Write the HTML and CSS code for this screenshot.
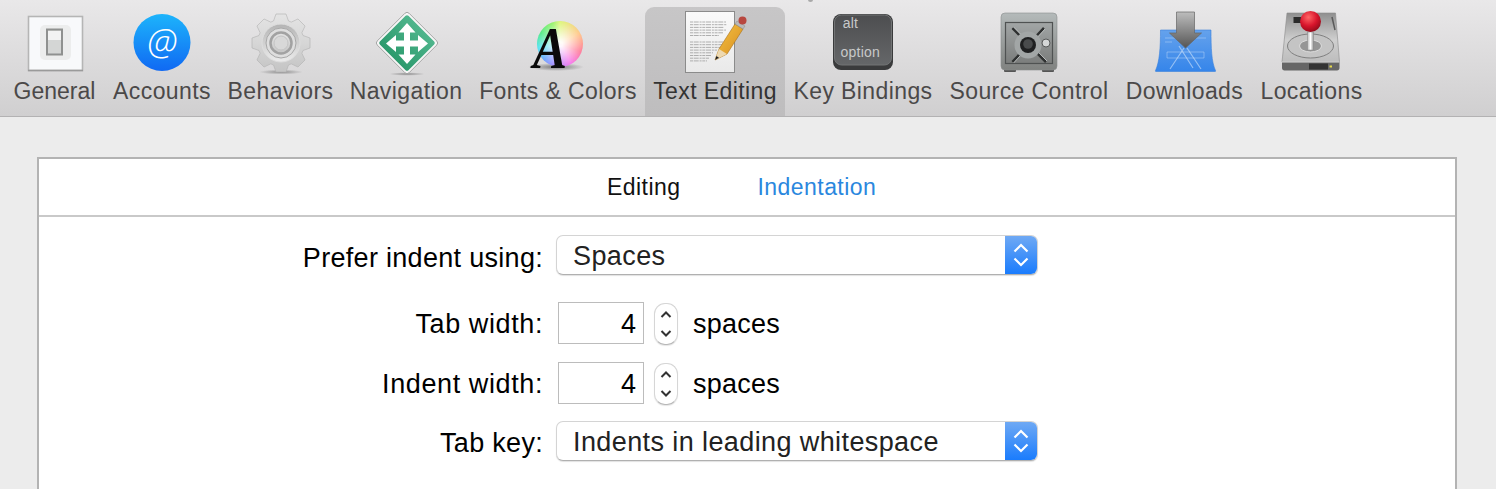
FILE: index.html
```html
<!DOCTYPE html>
<html lang="en">
<head>
<meta charset="utf-8">
<title>Text Editing Preferences</title>
<link rel="stylesheet" href="styles.css">
</head>
<body>
<svg class="defs" width="0" height="0" aria-hidden="true">
  <defs>
    <linearGradient id="g-blue" x1="0" y1="0" x2="0" y2="1"><stop offset="0" stop-color="#1db4fb"/><stop offset="1" stop-color="#1069f3"/></linearGradient>
    <linearGradient id="g-silver" x1="0" y1="0" x2="0" y2="1"><stop offset="0" stop-color="#e4e4e4"/><stop offset=".5" stop-color="#d6d6d6"/><stop offset="1" stop-color="#c4c4c4"/></linearGradient>
    <linearGradient id="g-silver2" x1="0" y1="0" x2="0" y2="1"><stop offset="0" stop-color="#b4b4b4"/><stop offset="1" stop-color="#ececec"/></linearGradient>
    <linearGradient id="g-green" x1="0" y1="0" x2="0" y2="1"><stop offset="0" stop-color="#4fb58c"/><stop offset="1" stop-color="#2c9a6d"/></linearGradient>
    <linearGradient id="g-key" x1="0" y1="0" x2="0" y2="1"><stop offset="0" stop-color="#4d4e50"/><stop offset="1" stop-color="#656769"/></linearGradient>
    <linearGradient id="g-safe" x1="0" y1="0" x2="0" y2="1"><stop offset="0" stop-color="#b4baba"/><stop offset="1" stop-color="#808280"/></linearGradient>
    <linearGradient id="g-door" x1="0" y1="0" x2="0" y2="1"><stop offset="0" stop-color="#a2a6a6"/><stop offset="1" stop-color="#7b7d7c"/></linearGradient>
    <linearGradient id="g-print" x1="0" y1="0" x2="0" y2="1"><stop offset="0" stop-color="#65a2ec"/><stop offset="1" stop-color="#3585ea"/></linearGradient>
    <linearGradient id="g-arrow" x1="0" y1="0" x2="0" y2="1"><stop offset="0" stop-color="#bdbdbd"/><stop offset="1" stop-color="#555"/></linearGradient>
    <linearGradient id="g-drive" x1="0" y1="0" x2="0" y2="1"><stop offset="0" stop-color="#8f8f8f"/><stop offset=".55" stop-color="#cfcfcf"/><stop offset="1" stop-color="#bdbdbd"/></linearGradient>
    <linearGradient id="g-pencil" x1="0" y1="0" x2="1" y2="1"><stop offset="0" stop-color="#f6c544"/><stop offset="1" stop-color="#d68a1e"/></linearGradient>
    <linearGradient id="g-page" x1="0" y1="0" x2="0" y2="1"><stop offset="0" stop-color="#fafafa"/><stop offset="1" stop-color="#e9e9e9"/></linearGradient>
    <linearGradient id="g-stem" x1="0" y1="0" x2="1" y2="0"><stop offset="0" stop-color="#bbb"/><stop offset=".5" stop-color="#fff"/><stop offset="1" stop-color="#999"/></linearGradient>
    <radialGradient id="g-ball" cx=".4" cy=".3" r=".75"><stop offset="0" stop-color="#f66"/><stop offset=".55" stop-color="#d8152c"/><stop offset="1" stop-color="#8c0a18"/></radialGradient>
    <radialGradient id="g-shadow"><stop offset="0" stop-color="#000" stop-opacity=".35"/><stop offset="1" stop-color="#000" stop-opacity="0"/></radialGradient>
  </defs>
</svg>

<nav class="toolbar">
  <a class="tool tool-general">
    <svg class="icon" viewBox="0 0 64 64">
      <rect x="5.500" y="6.500" width="54" height="54" fill="#f8f9fb" stroke="#b5b5b5" stroke-width="1.600"/>
      <path d="M5 60.500H60" stroke="#9a9a9a" stroke-width="1.500"/>
      <rect x="17" y="15" width="31" height="35" rx="5" fill="#eceded"/>
      <rect x="24" y="19.500" width="15" height="25" fill="#d4d6d5" stroke="#8f9190" stroke-width="2"/>
      <rect x="25" y="21" width="13" height="9" fill="#f2f3f3"/>
    </svg>
    <span class="tool-label label-tight">General</span>
  </a>
  <a class="tool tool-accounts">
    <svg class="icon" viewBox="0 0 64 64">
      <circle cx="32" cy="32.500" r="28.500" fill="url(#g-blue)"/>
      <text class="at-sign" x="32" y="45" text-anchor="middle">@</text>
    </svg>
    <span class="tool-label">Accounts</span>
  </a>
  <a class="tool tool-behaviors">
    <svg class="icon" viewBox="0 0 64 64">
      <ellipse cx="32" cy="62" rx="22" ry="2.500" fill="url(#g-shadow)"/>
      <polygon transform="translate(32 33)" fill="url(#g-silver)" stroke="#b0b0b0" stroke-width=".6" points="-7.500,-22 -5,-29 5,-29 7.500,-22 10.250,-20.860 16.970,-24.040 24.040,-16.970 20.860,-10.250 22,-7.500 29,-5 29,5 22,7.500 20.860,10.250 24.040,16.970 16.970,24.040 10.250,20.860 7.500,22 5,29 -5,29 -7.500,22 -10.250,20.860 -16.970,24.040 -24.040,16.970 -20.860,10.250 -22,7.500 -29,5 -29,-5 -22,-7.500 -20.860,-10.250 -24.040,-16.970 -16.970,-24.040 -10.250,-20.860"/>
      <circle cx="32" cy="33" r="19" fill="url(#g-silver2)" stroke="#dedede"/>
      <circle cx="32" cy="33" r="15" fill="#dedede" stroke="#a8a8a8"/>
      <circle cx="32" cy="33" r="10.500" fill="url(#g-silver)" stroke="#a2a2a2" stroke-width="2.500"/>
      <circle cx="32" cy="33" r="7" fill="#d8d8d8" stroke="#c4c4c4"/>
    </svg>
    <span class="tool-label">Behaviors</span>
  </a>
  <a class="tool tool-navigation">
    <svg class="icon" viewBox="0 0 64 64">
      <ellipse cx="33" cy="64" rx="18" ry="1.800" fill="url(#g-shadow)"/>
      <rect x="10.500" y="10.500" width="45" height="45" rx="3" transform="rotate(45 33 33)" fill="#f6f6f6" stroke="#999" stroke-width=".8"/>
      <rect x="12.800" y="12.800" width="40.400" height="40.400" rx="2" transform="rotate(45 33 33)" fill="url(#g-green)"/>
      <path fill="#fff" d="M33 13 41.500 22.500H36V30.500H44V25L54 33.500 44 42V36.500H36V44.500H41.500L33 54 24.500 44.500H30V36.500H22V42L12 33.500 22 25V30.500H30V22.500H24.500Z"/>
    </svg>
    <span class="tool-label">Navigation</span>
  </a>
  <a class="tool tool-fonts">
    <span class="fonts-icon">
      <span class="fonts-shadow"></span>
      <span class="fonts-wheel"></span>
      <span class="fonts-a">A</span>
    </span>
    <span class="tool-label">Fonts &amp; Colors</span>
  </a>
  <a class="tool tool-text is-active">
    <svg class="icon" viewBox="0 0 64 64">
      <rect x="2.500" y="1.500" width="49" height="61" fill="url(#g-page)" stroke="#8b8b8b"/>
      <g stroke="#a6a6a6" stroke-width=".9" stroke-dasharray="3 .7 5 .9 2 .7">
        <path d="M7 12H43M7 14.700H44M7 17.400H41M7 20.100H43M7 22.800H40M7 25.500H36"/>
        <path d="M7 32H44M7 34.700H41M7 37.400H40M7 40.100H34M7 42.800H30M7 45.500H28M7 48.200H26M7 50.900H24"/>
      </g>
      <path d="M32 50 36 39 52 14 60 19 44 44Z" fill="url(#g-pencil)" stroke="#a8701a" stroke-width=".6"/>
      <path d="M32 50 36 39 44 44Z" fill="#eed9b0"/>
      <path d="M32 50 33.400 46 36 47.700Z" fill="#222"/>
      <path d="M52 14 54 11 62 16 60 19Z" fill="#b9b9b9" stroke="#8a8a8a" stroke-width=".5"/>
      <circle cx="59.500" cy="10.500" r="4" fill="#b8473f"/>
    </svg>
    <span class="tool-label">Text Editing</span>
  </a>
  <a class="tool tool-keys">
    <svg class="icon" viewBox="0 0 64 64">
      <rect x="2" y="4" width="60" height="56" rx="8" fill="#3a3b3c"/>
      <rect x="3.500" y="5" width="57" height="50" rx="7" fill="url(#g-key)" stroke="#727475"/>
      <text class="key-text" x="11.700" y="18">alt</text>
      <text class="key-text" x="9.600" y="47">option</text>
    </svg>
    <span class="tool-label">Key Bindings</span>
  </a>
  <a class="tool tool-source">
    <svg class="icon" viewBox="0 0 64 64">
      <rect x="7" y="58" width="12" height="4" rx="1" fill="#555"/>
      <rect x="45" y="58" width="12" height="4" rx="1" fill="#555"/>
      <rect x="4" y="3" width="56" height="57" rx="4" fill="url(#g-safe)" stroke="#8b8f8f" stroke-width=".6"/>
      <rect x="8.500" y="12.500" width="47" height="41" fill="url(#g-door)" stroke="#4f5252" stroke-width="1.200"/>
      <path d="M15.500 18 49 52M47 18 15.500 52" stroke="#2f3131" stroke-width="2.600"/>
      <path d="M16.500 17 50 51M48 19 16.500 53" stroke="#d2d5d5" stroke-width=".8"/>
      <circle cx="31" cy="35" r="13.500" fill="#a2a6a6"/>
      <circle cx="31" cy="35" r="8" fill="#1f2021"/>
      <circle cx="31" cy="34" r="4.800" fill="#494b4c"/>
      <circle cx="49" cy="33" r="4" fill="#d5d7d7" stroke="#585a5a"/>
    </svg>
    <span class="tool-label">Source Control</span>
  </a>
  <a class="tool tool-downloads">
    <svg class="icon" viewBox="0 0 64 64">
      <path d="M7.500 20H58C58 38 58.500 52 62.500 60.500 63 61 62.500 61.500 62 61.500H3C2.500 61.500 2 61 2.500 60.500 6.500 52 7.500 38 7.500 20Z" fill="url(#g-print)" stroke="#3b82dc" stroke-width=".6"/>
      <g stroke="#cfe3fa" fill="none" stroke-opacity=".6">
        <path stroke-width=".7" d="M12 28H23M12 32H19M43 28H53M14 42H51V48H14Z"/>
        <path stroke-width="1.200" d="M31 38 17 59M34 38 48 59M26 36 40 58"/>
      </g>
      <path d="M23.500 2H41.500V23H48.500L32.500 38 16.500 23H23.500Z" fill="url(#g-arrow)" stroke="#666" stroke-width=".7"/>
    </svg>
    <span class="tool-label">Downloads</span>
  </a>
  <a class="tool tool-locations">
    <svg class="icon" viewBox="0 0 64 64">
      <path d="M7 3H55.500L59.500 52H2Z" fill="url(#g-drive)" stroke="#8a8a8a" stroke-width=".6"/>
      <path d="M2 52H59.500V58C59.500 59.500 58.500 60.500 57 60.500H4.500C3 60.500 2 59.500 2 58Z" fill="#666"/>
      <path d="M2 52H59.500" stroke="#ddd"/>
      <rect x="29" y="53.500" width="19" height="6" fill="#333"/>
      <rect x="49.500" y="55.500" width="2.500" height="2" fill="#e5d94a"/>
      <rect x="13.500" y="7" width="13.500" height="6" fill="#2b2b2b"/>
      <path d="M52 7 55 20" stroke="#5a5a5a" stroke-width="1.500"/>
      <ellipse cx="30.500" cy="36" rx="23" ry="12" fill="#c4c4c4" stroke="#7f7f7f"/>
      <ellipse cx="30.500" cy="36" rx="11" ry="6" fill="#959595" stroke="#dcdcdc"/>
      <rect x="27.500" y="22" width="6" height="18" fill="url(#g-stem)" stroke="#888" stroke-width=".5"/>
      <circle cx="30.500" cy="11.500" r="10.500" fill="url(#g-ball)"/>
    </svg>
    <span class="tool-label">Locations</span>
  </a>
</nav>

<main class="content">
  <section class="panel">
    <div class="tabs">
      <span class="tab">Editing</span>
      <span class="tab tab-current">Indentation</span>
    </div>
    <div class="form">
      <div class="row row-popup">
        <span class="row-label">Prefer indent using:</span>
        <div class="popup">
          <span class="popup-value">Spaces</span>
          <span class="popup-arrows">
            <svg width="18" height="26" viewBox="0 0 18 26"><path d="M2.500 9.500 9 3 15.500 9.500M2.500 16.500 9 23 15.500 16.500" fill="none" stroke="#fff" stroke-width="2.200"/></svg>
          </span>
        </div>
      </div>
      <div class="row row-number">
        <span class="row-label">Tab width:</span>
        <span class="field">4</span>
        <span class="stepper">
          <svg width="14" height="32" viewBox="0 0 14 32"><path d="M2.500 9 7 4.500 11.500 9M2.500 23 7 27.500 11.500 23" fill="none" stroke="#333" stroke-width="2"/></svg>
        </span>
        <span class="unit">spaces</span>
      </div>
      <div class="row row-number row-second">
        <span class="row-label">Indent width:</span>
        <span class="field">4</span>
        <span class="stepper">
          <svg width="14" height="32" viewBox="0 0 14 32"><path d="M2.500 9 7 4.500 11.500 9M2.500 23 7 27.500 11.500 23" fill="none" stroke="#333" stroke-width="2"/></svg>
        </span>
        <span class="unit">spaces</span>
      </div>
      <div class="row row-popup row-last">
        <span class="row-label">Tab key:</span>
        <div class="popup">
          <span class="popup-value">Indents in leading whitespace</span>
          <span class="popup-arrows">
            <svg width="18" height="26" viewBox="0 0 18 26"><path d="M2.500 9.500 9 3 15.500 9.500M2.500 16.500 9 23 15.500 16.500" fill="none" stroke="#fff" stroke-width="2.200"/></svg>
          </span>
        </div>
      </div>
    </div>
  </section>
</main>
</body>
</html>
```
FILE: styles.css
```css
* { box-sizing: border-box; }
html, body { margin: 0; height: 489px; overflow: hidden; }
body {
  background: #ececec;
  font-family: "Liberation Sans", Arial, sans-serif;
  color: #000;
  position: relative;
}
body::before {
  content: "";
  position: absolute;
  left: 808px;
  top: -2px;
  width: 5px;
  height: 4px;
  border-radius: 50%;
  background: #a9a9a9;
}
.defs { position: absolute; }

.toolbar {
  display: flex;
  height: 117px;
  padding-left: 5px;
  align-items: stretch;
  background: linear-gradient(#e9e8e9, #d0cfd0);
  border-bottom: 1px solid #b3b2b3;
}
.tool {
  display: flex;
  flex-direction: column;
  align-items: center;
  padding-top: 10px;
}
.tool-general { width: 99px; }
.tool-accounts { width: 116px; }
.tool-behaviors { width: 121px; }
.tool-navigation { width: 130px; }
.tool-fonts { width: 174px; }
.tool-text { width: 140px; }
.tool-keys { width: 156px; }
.tool-source { width: 176px; }
.tool-downloads { width: 135px; }
.tool-locations { width: 119px; }
.tool.is-active {
  margin-top: 7px;
  padding-top: 3px;
  background: linear-gradient(#c7c6c7, #bebdbe);
  border-radius: 9px 9px 0 0;
}
.is-active .tool-label { color: #333; }
.icon { display: block; width: 64px; height: 64px; flex: none; overflow: visible; }
.tool-label {
  margin-top: 3px;
  font-size: 23px;
  line-height: 28px;
  letter-spacing: .4px;
  white-space: nowrap;
  color: #4b4949;
}
.label-tight { letter-spacing: 0; }

.at-sign {
  font-family: "Open Sans", "Liberation Sans", sans-serif;
  font-weight: 300;
  font-size: 36px;
  fill: #fff;
  font-style: italic;
}
.key-text {
  font-family: "Liberation Sans", sans-serif;
  font-size: 14px;
  letter-spacing: .2px;
  fill: #c8c9c9;
}

.fonts-icon { display: block; position: relative; width: 64px; height: 64px; flex: none; }
.fonts-wheel {
  position: absolute;
  left: 11px;
  top: 11px;
  width: 46px;
  height: 46px;
  border-radius: 50%;
  background:
    radial-gradient(circle, rgba(255,255,255,.95) 8%, rgba(255,255,255,0) 78%),
    conic-gradient(from 0deg, #d9f56a, #ffc27a 60deg, #ff6f8f 110deg, #f56be8 150deg, #a978ff 190deg, #5b9aff 225deg, #3fe0f0 260deg, #3fe878 300deg, #8bf05a 340deg, #d9f56a);
}
.fonts-a {
  position: absolute;
  left: 7px;
  top: 8px;
  font-family: "Liberation Serif", serif;
  font-weight: bold;
  font-style: italic;
  font-size: 60px;
  line-height: 60px;
  color: #0a0a0a;
  transform: scaleX(.85);
  transform-origin: left center;
}
.fonts-shadow {
  position: absolute;
  left: 2px;
  top: 53px;
  width: 56px;
  height: 8px;
  border-radius: 50%;
  background: radial-gradient(closest-side, rgba(0,0,0,.45), rgba(0,0,0,0));
}

.content { padding: 40px 39px 0 37px; }
.panel {
  background: #fff;
  border: 2px solid #b3b3b3;
  height: 400px;
}
.tabs {
  display: flex;
  height: 58px;
  padding-left: 568px;
  align-items: center;
  gap: 77px;
  border-bottom: 2px solid #c9c9c9;
}
.tab { font-size: 23px; letter-spacing: .45px; color: #111; }
.tab-current { color: #2a87de; }

.form { padding-top: 18px; }
.row { display: flex; align-items: center; }
.row-popup { height: 40px; }
.row-number { height: 42px; margin-top: 27px; }
.row-second { margin-top: 18px; }
.row-last { margin-top: 17px; }
.row-label {
  flex: none;
  width: 504px;
  margin-right: 13px;
  text-align: right;
  font-size: 27px;
  letter-spacing: .3px;
  padding-top: 6px;
}
.row-number .row-label { letter-spacing: .6px; padding-top: 2px; }
.row-last .row-label { padding-top: 5px; }
.popup {
  display: flex;
  width: 482px;
  height: 40px;
  border: 1px solid #d4d4d4;
  border-bottom-color: #b0b0b0;
  border-radius: 7px;
  box-shadow: 0 1px 1px rgba(0,0,0,.12);
  overflow: hidden;
  background: #fff;
}
.popup-value {
  flex: 1;
  padding-left: 16px;
  font-size: 27px;
  line-height: 40px;
  letter-spacing: .4px;
  color: #222;
}
.popup-arrows {
  flex: none;
  width: 32px;
  display: flex;
  align-items: center;
  justify-content: center;
  background: linear-gradient(#6fa9f4, #1a7cfd);
}
.field {
  flex: none;
  width: 86px;
  height: 42px;
  margin-left: 2px;
  border: 1px solid #bcbcbc;
  padding-right: 7px;
  text-align: right;
  font-size: 27px;
  line-height: 43px;
}
.stepper {
  flex: none;
  width: 24px;
  height: 42px;
  margin: 2px 0 0 10px;
  display: flex;
  align-items: center;
  justify-content: center;
  border: 1px solid #d6d6d6;
  border-bottom-color: #b8b8b8;
  border-radius: 11px;
  box-shadow: 0 1px 1px rgba(0,0,0,.1);
}
.unit { margin-left: 15px; font-size: 27px; letter-spacing: .25px; padding-top: 2px; }
```
